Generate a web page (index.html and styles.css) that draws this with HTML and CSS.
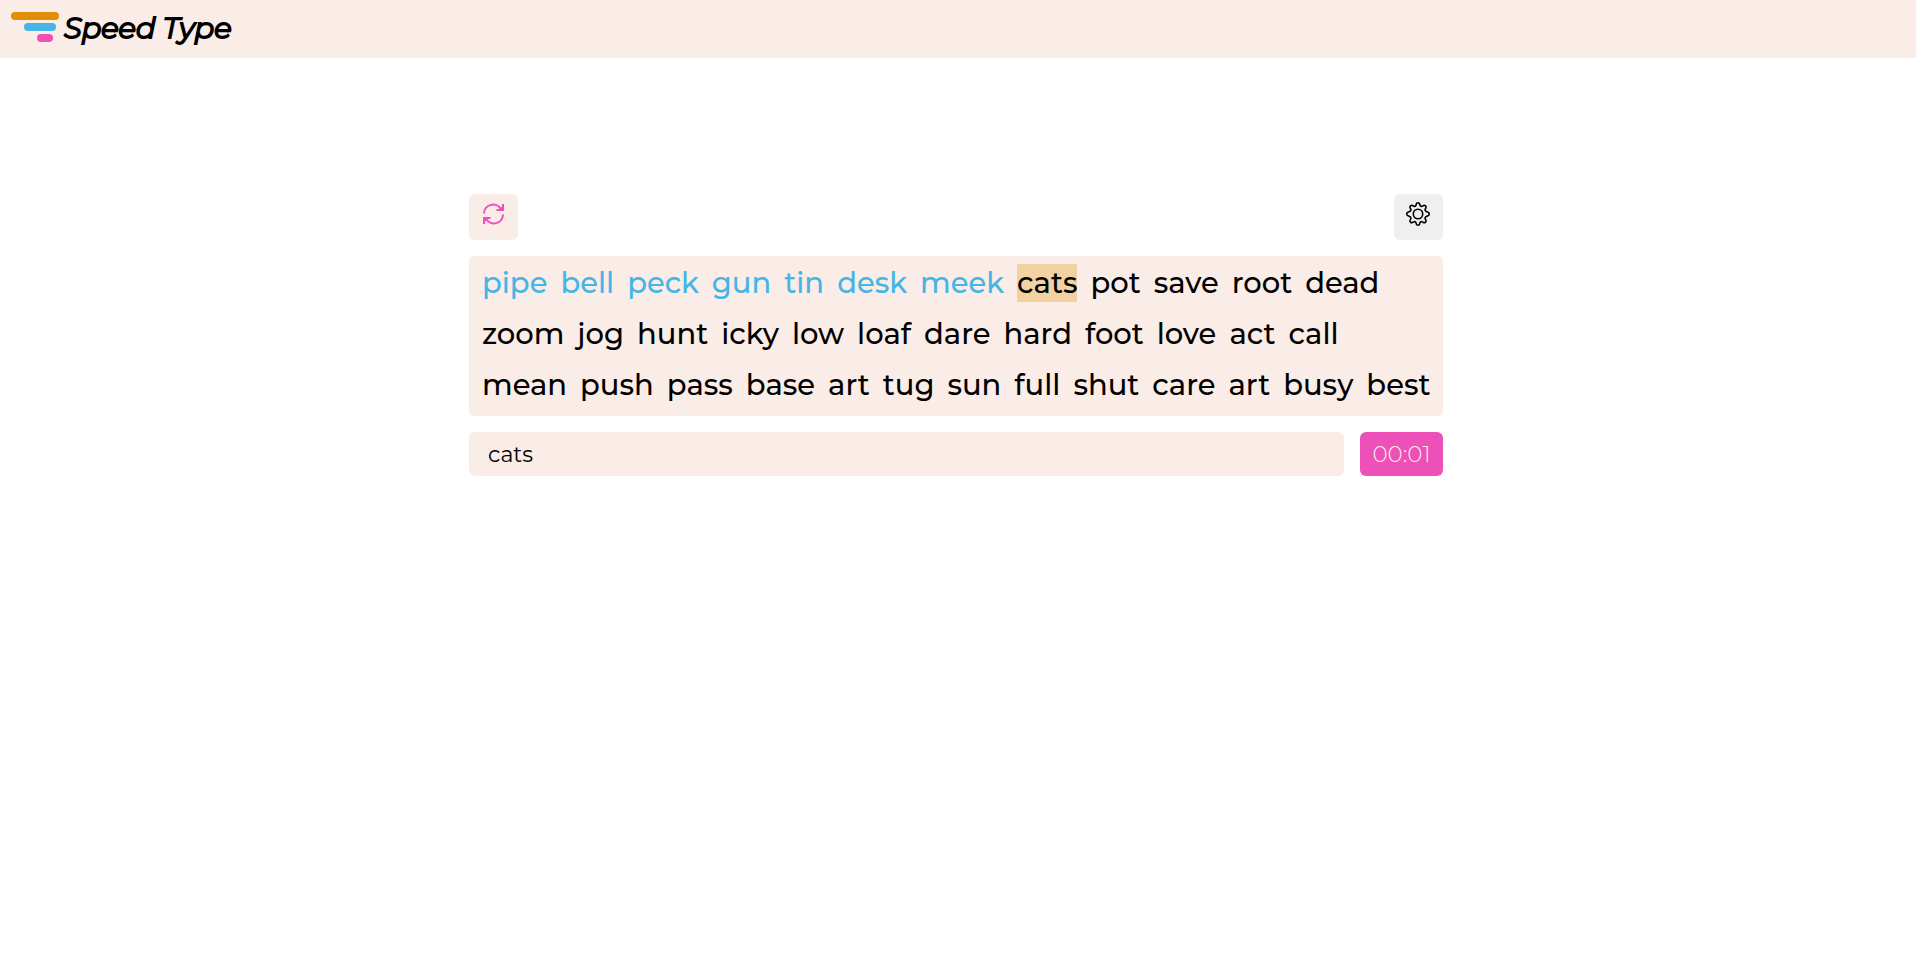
FILE: index.html
```
<!DOCTYPE html>
<html lang="en">
<head>
    <meta charset="UTF-8">
    <meta name="viewport" content="width=device-width, initial-scale=1.0">
    <title>Speed Type</title>
    <link rel="stylesheet" href="styles.css">
</head>
<body>
    <header class="header">
        <div class="logo">
            <span class="bar bar-long"></span>
            <span class="bar bar-mid"></span>
            <span class="bar bar-short"></span>
        </div>
        <h1 class="title">Speed Type</h1>
    </header>

    <main class="container">
        <div class="toolbar">
            <button class="btn btn-refresh" type="button" aria-label="New words">
                <svg width="24" height="24" viewBox="0 0 24 24" fill="none" stroke="currentColor" stroke-width="2">
                    <path d="M3 11.500a9 9 0 0 1 17-4M22 12.500a9 9 0 0 1-17 4"/>
                    <path d="M15.500 8H22V2M9.500 16H3v6"/>
                    <path d="M17 8h5V3.500zM8 16H3v4.500z" fill="currentColor" stroke="none"/>
                </svg>
            </button>
            <button class="btn btn-settings" type="button" aria-label="Settings">
                <svg width="24" height="24" viewBox="0 0 24 24" fill="none" stroke="currentColor" stroke-width="1.6" stroke-linejoin="round">
                    <circle cx="12" cy="12" r="4.7"/>
                    <path d="M10.400 1.800Q10.600.8 12 .8t1.600 1l.3 1.200c.3 1.200 1.500 1.700 2.500 1.100l1.100-.6q1-.6 2 .4t.4 2l-.6 1.100c-.6 1 0 2.200 1.100 2.500l1.800.9q1 .2 1 1.600t-1 1.600l-1.800.9c-1.100.3-1.700 1.500-1.100 2.500l.6 1.100q.6 1-.4 2t-2 .4l-1.100-.6c-1-.6-2.200-.1-2.500 1.100l-.3 1.200q-.2 1-1.600 1t-1.600-1l-.3-1.200c-.3-1.200-1.500-1.700-2.500-1.100l-1.100.6q-1 .6-2-.4t-.4-2l.6-1.100c.6-1 0-2.200-1.100-2.500l-1.800-.9Q.8 13.400.8 12t1-1.600l1.800-.9c1.100-.3 1.700-1.500 1.100-2.500l-.6-1.100q-.6-1 .4-2t2-.4l1.100.6c1 .6 2.200.1 2.500-1.100z"/>
                </svg>
            </button>
        </div>

        <div class="words">
            <div class="row">
                <span class="done">pipe</span>
                <span class="done">bell</span>
                <span class="done">peck</span>
                <span class="done">gun</span>
                <span class="done">tin</span>
                <span class="done">desk</span>
                <span class="done">meek</span>
                <span class="current">cats</span>
                <span>pot</span>
                <span>save</span>
                <span>root</span>
                <span>dead</span>
            </div>
            <div class="row">
                <span>zoom</span>
                <span>jog</span>
                <span>hunt</span>
                <span>icky</span>
                <span>low</span>
                <span>loaf</span>
                <span>dare</span>
                <span>hard</span>
                <span>foot</span>
                <span>love</span>
                <span>act</span>
                <span>call</span>
            </div>
            <div class="row">
                <span>mean</span>
                <span>push</span>
                <span>pass</span>
                <span>base</span>
                <span>art</span>
                <span>tug</span>
                <span>sun</span>
                <span>full</span>
                <span>shut</span>
                <span>care</span>
                <span>art</span>
                <span>busy</span>
                <span>best</span>
            </div>
        </div>

        <div class="entry">
            <input class="type-input" type="text" value="cats" aria-label="Type the words" autocomplete="off" spellcheck="false">
            <div class="timer">00:01</div>
        </div>
    </main>
</body>
</html>
```
FILE: styles.css
```
* {
    box-sizing: border-box;
}
body {
    margin: 0;
    font-family: Montserrat, Inter, sans-serif;
    color: #000;
    background-color: #fff;
}
.header {
    display: flex;
    align-items: center;
    gap: 5px;
    height: 58px;
    padding: 0 11px;
    background-color: #faece6;
}
.logo {
    display: flex;
    flex-direction: column;
    gap: 3px;
    width: 48px;
    padding-bottom: 4px;
}
.bar {
    height: 8px;
    border-radius: 4px;
}
.bar-long {
    background-color: #e08e05;
}
.bar-mid {
    width: 32px;
    margin-left: 13px;
    background-color: #45b5e6;
}
.bar-short {
    width: 16px;
    margin-left: 26px;
    background-color: #ee50b9;
}
.title {
    margin: 0;
    padding-bottom: 2px;
    font-size: 29px;
    line-height: 38px;
    font-weight: 300;
    font-style: italic;
    -webkit-text-stroke: 2px #000;
}

/* Typing area */
.container {
    display: flex;
    flex-direction: column;
    gap: 16px;
    width: 974px;
    max-width: 100%;
    margin: 0 auto;
    padding-top: 136px;
    position: relative;
    right: 2px;
}
.toolbar {
    display: flex;
    justify-content: space-between;
}
.btn {
    display: flex;
    width: 49px;
    height: 46px;
    padding: 8px 12px;
    border: none;
    border-radius: 6px;
    cursor: pointer;
}
.btn svg {
    flex-shrink: 0;
}
.btn-refresh {
    color: #ee50b9;
    background-color: #faece6;
}
.btn-settings {
    color: #000;
    background-color: #efefef;
}
.words {
    display: flex;
    flex-direction: column;
    gap: 13px;
    padding: 8px 12px 12px 13px;
    border-radius: 6px;
    background-color: #faece6;
}
.row {
    display: flex;
    flex-wrap: wrap;
    gap: 13px;
    font-size: 29px;
    line-height: 38px;
    font-weight: 500;
}
.done {
    color: #45b5e6;
}
.current {
    background-color: #f2d2a0;
}
.entry {
    display: flex;
    gap: 16px;
}
.type-input {
    flex: 1;
    min-width: 0;
    height: 44px;
    padding: 0 19px;
    border: none;
    border-radius: 6px;
    outline: none;
    font-family: inherit;
    font-size: 22px;
    color: #000;
    background-color: #faece6;
}
.timer {
    width: 83px;
    border-radius: 6px;
    font-size: 23px;
    line-height: 44px;
    font-weight: 300;
    text-align: center;
    color: #faece6;
    background-color: #ee50b9;
}
```
